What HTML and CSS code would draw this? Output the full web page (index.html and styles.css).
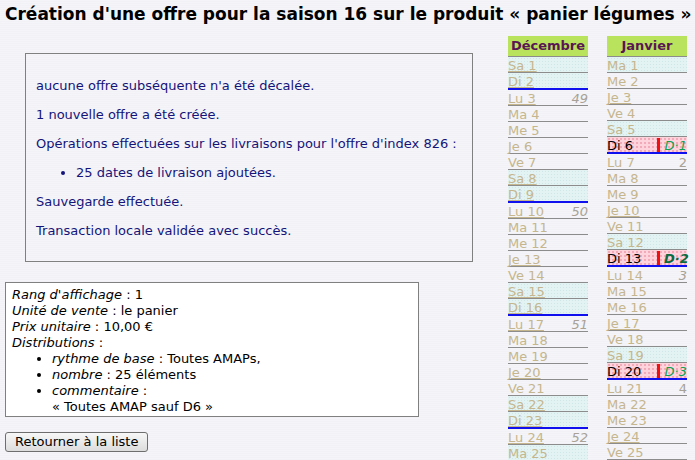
FILE: index.html
```html
<!DOCTYPE html>
<html lang="fr">
<head>
<meta charset="utf-8">
<title>Création d'une offre</title>
<link rel="stylesheet" href="styles.css">
</head>
<body>
<h1 class="title">Création d'une offre pour la saison 16 sur le produit « panier légumes »</h1>
<div class="page">
  <div class="left">
    <div class="messages">
      <p>aucune offre subséquente n'a été décalée.</p>
      <p>1 nouvelle offre a été créée.</p>
      <p>Opérations effectuées sur les livraisons pour l'offre d'index 826 :</p>
      <ul><li>25 dates de livraison ajoutées.</li></ul>
      <p>Sauvegarde effectuée.</p>
      <p>Transaction locale validée avec succès.</p>
    </div>
    <div class="details">
      <div><i>Rang d'affichage</i> : 1</div>
      <div><i>Unité de vente</i> : le panier</div>
      <div><i>Prix unitaire</i> : 10,00 €</div>
      <div><i>Distributions</i> :</div>
      <ul>
        <li><i>rythme de base</i> : Toutes AMAPs,</li>
        <li><i>nombre</i> : 25 éléments</li>
        <li><i>commentaire</i> :<br>« Toutes AMAP sauf D6 »</li>
      </ul>
    </div>
    <button class="btn" type="button">Retourner à la liste</button>
  </div>
  <div class="calendar">
    <div class="month">
      <div class="mhead">Décembre</div>
      <div class="day we u"><span>Sa 1</span></div>
      <div class="day we sun u"><span>Di 2</span></div>
      <div class="day u"><span>Lu 3</span><span class="wk">49</span></div>
      <div class="day"><span>Ma 4</span></div>
      <div class="day"><span>Me 5</span></div>
      <div class="day"><span>Je 6</span></div>
      <div class="day"><span>Ve 7</span></div>
      <div class="day we u"><span>Sa 8</span></div>
      <div class="day we sun u"><span>Di 9</span></div>
      <div class="day u"><span>Lu 10</span><span class="wk">50</span></div>
      <div class="day"><span>Ma 11</span></div>
      <div class="day"><span>Me 12</span></div>
      <div class="day u"><span>Je 13</span></div>
      <div class="day"><span>Ve 14</span></div>
      <div class="day we u"><span>Sa 15</span></div>
      <div class="day we sun u"><span>Di 16</span></div>
      <div class="day u"><span>Lu 17</span><span class="wk">51</span></div>
      <div class="day"><span>Ma 18</span></div>
      <div class="day"><span>Me 19</span></div>
      <div class="day u"><span>Je 20</span></div>
      <div class="day"><span>Ve 21</span></div>
      <div class="day we u"><span>Sa 22</span></div>
      <div class="day we sun u"><span>Di 23</span></div>
      <div class="day u"><span>Lu 24</span><span class="wk">52</span></div>
      <div class="day we"><span>Ma 25</span></div>
      <div class="day we"><span>Me 26</span></div>
    </div>
    <div class="month">
      <div class="mhead">Janvier</div>
      <div class="day we"><span>Ma 1</span></div>
      <div class="day"><span>Me 2</span></div>
      <div class="day u"><span>Je 3</span></div>
      <div class="day"><span>Ve 4</span></div>
      <div class="day we"><span>Sa 5</span></div>
      <div class="day sun dl"><span>Di 6</span><span class="bar"></span><span class="dn">D·1</span></div>
      <div class="day"><span>Lu 7</span><span class="wk up">2</span></div>
      <div class="day"><span>Ma 8</span></div>
      <div class="day"><span>Me 9</span></div>
      <div class="day u"><span>Je 10</span></div>
      <div class="day"><span>Ve 11</span></div>
      <div class="day we"><span>Sa 12</span></div>
      <div class="day sun dl"><span>Di 13</span><span class="bar"></span><span class="dn strong">D·2</span></div>
      <div class="day"><span>Lu 14</span><span class="wk">3</span></div>
      <div class="day"><span>Ma 15</span></div>
      <div class="day"><span>Me 16</span></div>
      <div class="day u"><span>Je 17</span></div>
      <div class="day"><span>Ve 18</span></div>
      <div class="day we"><span>Sa 19</span></div>
      <div class="day sun dl"><span>Di 20</span><span class="bar"></span><span class="dn">D·3</span></div>
      <div class="day"><span>Lu 21</span><span class="wk up">4</span></div>
      <div class="day"><span>Ma 22</span></div>
      <div class="day"><span>Me 23</span></div>
      <div class="day u"><span>Je 24</span></div>
      <div class="day"><span>Ve 25</span></div>
      <div class="day we"><span>Sa 26</span></div>
    </div>
  </div>
</div>
</body>
</html>
```
FILE: styles.css
```css
html, body {
  margin: 0;
  padding: 0;
}
body {
  background-color: #f3f3f8;
  background-image: repeating-linear-gradient(to bottom, #f5f5f9 0, #f5f5f9 1px, #f1f1f6 1px, #f1f1f6 2px);
  font-family: "DejaVu Sans", Verdana, sans-serif;
  font-size: 13px;
  line-height: 16px;
  color: #000;
  padding: 0 5px;
  overflow: hidden;
  height: 460px;
}
.title {
  font-size: 17px;
  line-height: 20px;
  font-weight: bold;
  margin: 0;
  padding-top: 4px;
  white-space: nowrap;
}
.page {
  display: flex;
  align-items: flex-start;
  margin-top: 12px;
}
.left {
  flex: 0 0 483px;
  display: flex;
  flex-direction: column;
  align-items: flex-start;
}
.messages {
  margin: 17px 0 0 20px;
  width: 426px;
  border: 1px solid #808080;
  padding: 11px 10px 9px 10px;
  color: #14147a;
}
.messages p {
  margin: 13px 0;
}
.messages ul {
  margin: 13px 0;
  padding-left: 40px;
}
.details {
  margin-top: 20px;
  width: 400px;
  background: #fff;
  border: 1px solid #808080;
  padding: 4px 6px 1px 6px;
}
.details ul {
  margin: 0;
  padding-left: 40px;
}
.btn {
  margin-top: 15px;
  height: 20px;
  padding: 0 9px;
  font-family: "DejaVu Sans", Verdana, sans-serif;
  font-size: 13px;
  line-height: 16px;
  color: #000;
  border: 1px solid #6e6e6e;
  border-radius: 3px;
  background: linear-gradient(to bottom, #f7f7f7, #dcdcdc);
}
.calendar {
  display: flex;
  gap: 19px;
  margin-left: 20px;
}
.month {
  width: 80px;
}
.mhead {
  background: #b9e35c;
  color: #5a1654;
  font-weight: bold;
  text-align: center;
  height: 20px;
  line-height: 20px;
  border-bottom: 1px solid #8c8c8c;
}
.day {
  box-sizing: border-box;
  height: 16px;
  padding-top: 2px;
  line-height: 14px;
  border-bottom: 1px solid #8c8c8c;
  color: #c5b68e;
  display: flex;
  justify-content: space-between;
  align-items: flex-start;
  white-space: nowrap;
}
.day.u > span:first-child {
  text-decoration: underline;
}
.we {
  background-color: #e3f3f3;
  background-image: radial-gradient(circle, #cfe7e7 0.6px, transparent 0.9px);
  background-size: 3px 3px;
}
.sun {
  height: 17px;
  border-bottom: 2px solid #1010ee;
}
.dl {
  background-color: #ffd3dc;
  background-image: radial-gradient(circle, #f2a9b9 0.7px, transparent 1px);
  background-size: 4px 4px;
  color: #000;
  justify-content: flex-start;
}
.bar {
  width: 3px;
  height: 14px;
  margin-top: -1px;
  background: #f01010;
  margin-left: auto;
}
.dn {
  width: 23px;
  margin-left: 4px;
  text-align: right;
  font-style: italic;
  color: #10a050;
  flex-shrink: 0;
}
.dn.strong {
  font-weight: bold;
  color: #0a6a40;
}
.wk {
  font-style: italic;
  color: #a8a296;
}
.wk.up {
  font-style: normal;
}
```
